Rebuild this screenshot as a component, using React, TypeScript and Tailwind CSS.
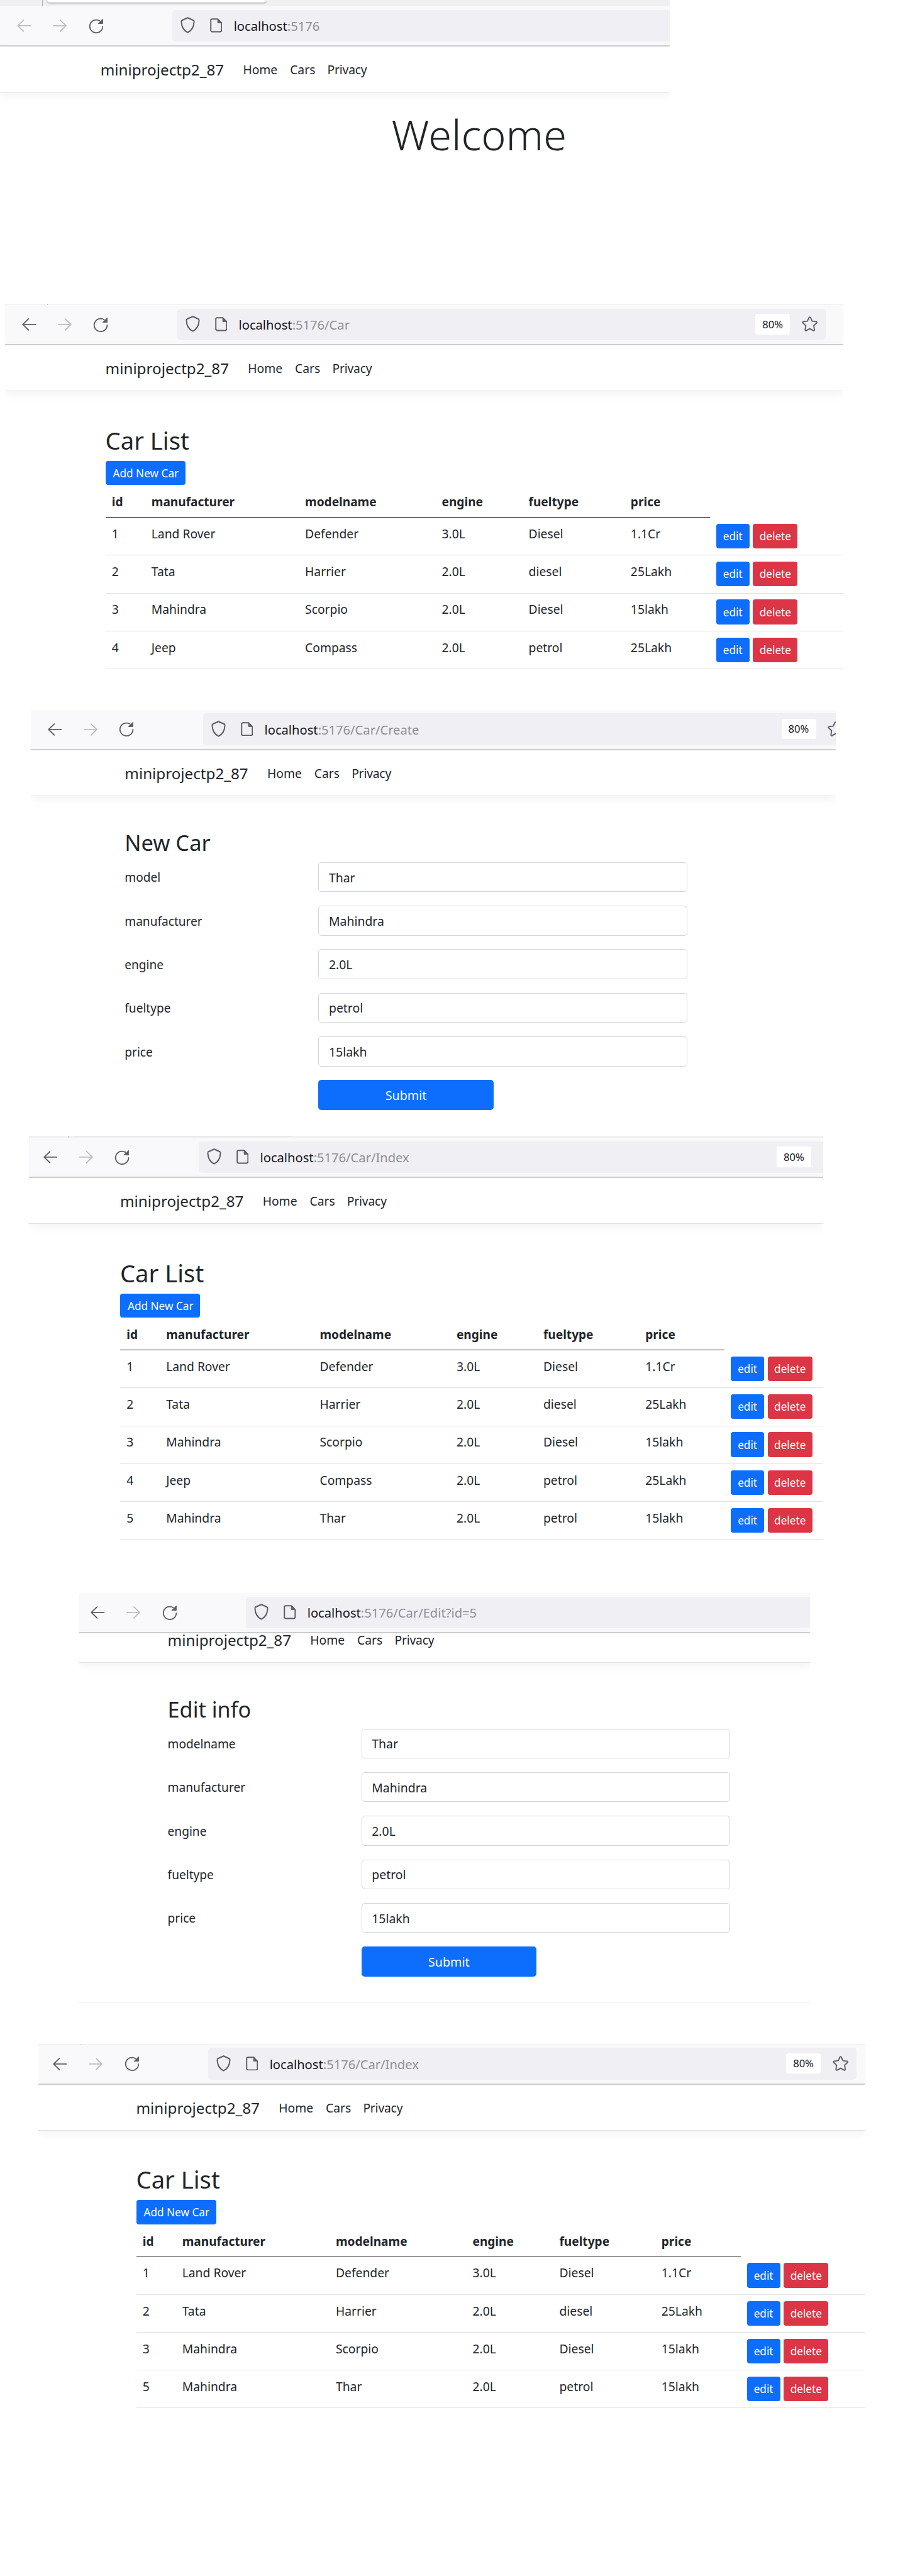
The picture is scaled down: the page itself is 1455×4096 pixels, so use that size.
import type { ReactNode } from "react";

type Car = [string, string, string, string, string, string];

const LAND_ROVER: Car = ["1", "Land Rover", "Defender", "3.0L", "Diesel", "1.1Cr"];
const TATA: Car = ["2", "Tata", "Harrier", "2.0L", "diesel", "25Lakh"];
const MAHINDRA: Car = ["3", "Mahindra", "Scorpio", "2.0L", "Diesel", "15lakh"];
const JEEP: Car = ["4", "Jeep", "Compass", "2.0L", "petrol", "25Lakh"];
const THAR: Car = ["5", "Mahindra", "Thar", "2.0L", "petrol", "15lakh"];

/* ---------- toolbar icons ---------- */

function ArrowLeft({ disabled }: { disabled: boolean }) {
  return (
    <svg viewBox="0 0 28 25" className="h-[19.8px] w-[22.2px] shrink-0" fill="none" stroke={disabled ? "#bdbdc2" : "#5b5b66"} strokeWidth="2.3" strokeLinecap="round" strokeLinejoin="round">
      <path d="M26.8 12.5H1.6M13 1.3 1.6 12.5 13 23.7" />
    </svg>
  );
}

function ArrowRight() {
  return (
    <svg viewBox="0 0 28 25" className="h-[19.8px] w-[22.2px] shrink-0" fill="none" stroke="#bdbdc2" strokeWidth="2.3" strokeLinecap="round" strokeLinejoin="round">
      <path d="M1.2 12.5h25.2M15 1.3l11.4 11.2L15 23.7" />
    </svg>
  );
}

function Reload() {
  return (
    <svg viewBox="0 0 30 31" className="h-[24.5px] w-[23.8px] shrink-0" fill="none">
      <path d="M22 5.2A13 13 0 1 0 28.2 16.3" stroke="#5b5b66" strokeWidth="2.3" strokeLinecap="round" />
      <path d="M28.3 1.6v9.2h-9.2z" fill="#5b5b66" stroke="#5b5b66" strokeWidth="1.2" strokeLinejoin="round" />
    </svg>
  );
}

function Shield() {
  return (
    <svg viewBox="0 0 29 33" className="mb-[2px] h-[25.8px] w-[23px] shrink-0" fill="none" stroke="#5b5b66" strokeWidth="2.5" strokeLinejoin="round">
      <path d="M14.5 1.6 25.9 6.7q1.6.8 1.5 2.7C27 19.5 22.8 27.4 14.5 31.4 6.2 27.4 2 19.5 1.6 9.4Q1.5 7.5 3.1 6.7Z" />
    </svg>
  );
}

function PageIcon() {
  return (
    <svg viewBox="0 0 25 29" className="mb-px h-[22.6px] w-[19.6px] shrink-0" fill="none" stroke="#5b5b66" strokeWidth="2.5" strokeLinejoin="round">
      <path d="M15.5 1.5H4.3A2.8 2.8 0 0 0 1.5 4.3v20.4a2.8 2.8 0 0 0 2.8 2.8h16.4a2.8 2.8 0 0 0 2.8-2.8V9.5z" />
      <path d="M15.5 1.8v7.7h7.7z" fill="#5b5b66" strokeWidth="1" />
    </svg>
  );
}

function Star({ className }: { className: string }) {
  return (
    <svg viewBox="0 0 32 31" className={`mb-px h-[24.6px] w-[25.4px] shrink-0 ${className}`} fill="none" stroke="#5b5b66" strokeWidth="2.4" strokeLinejoin="round">
      <path d="M14.5 2.5q1.5-2.2 3 0l3.3 7.1 7.9 1q2.5.6 1 2.6l-5.7 5.5 1.3 8q0 2.6-2.5 1.8L16 24.7l-6.8 3.8q-2.5.8-2.5-1.8l1.3-8-5.7-5.5q-1.5-2 1-2.6l7.9-1z" />
    </svg>
  );
}

/* ---------- shared pieces ---------- */

type WindowProps = {
  /** left offset and width of the window */
  frame: string;
  /** left padding of the browser toolbar */
  toolbar: string;
  /** left padding of the page container */
  container: string;
  path: string;
  strip: ReactNode;
  urlBar?: string;
  zoom?: ReactNode;
  nav?: string;
  children: ReactNode;
};

function BrowserWindow({ frame, toolbar, container, path, strip, urlBar = "rounded-l-[5px]", zoom, nav = "h-[73px]", children }: WindowProps) {
  return (
    <div className={`overflow-hidden ${frame}`}>
      {strip}
      <div className={`flex h-[64.3px] items-center border-b-2 border-[#cfcfd2] bg-[#f9f9fb] ${toolbar}`}>
        <ArrowLeft disabled={path === ""} />
        <div className="w-[34.8px] shrink-0" />
        <ArrowRight />
        <div className="w-[34.4px] shrink-0" />
        <Reload />
        <div className="w-[109.3px] shrink-0" />
        <div className={`flex h-[50.7px] min-w-0 flex-1 items-center bg-[#f0f0f4] pl-[13.5px] ${urlBar}`}>
          <Shield />
          <div className="w-[23.7px] shrink-0" />
          <PageIcon />
          <div className="ml-[18.2px] pt-[0.5px] text-[20.15px] leading-[30px] whitespace-nowrap text-[#8f8f96]">
            <span className="text-[#15141a]">localhost</span>:5176{path}
          </div>
          <div className="flex-1" />
          {zoom}
        </div>
      </div>
      <div className={`flex items-end border-b border-[#dfe1e3] shadow-[0_5px_15px_rgba(0,0,0,0.05)] ${nav} ${container}`}>
        <div className="flex h-[72px] shrink-0 items-center text-[19.3px]">
          <div className="w-[226.7px] pt-[2px] text-[24.2px] leading-[38px]">miniprojectp2_87</div>
          <div className="w-[74.8px] pt-[3px]">Home</div>
          <div className="w-[59.4px] pt-[3px]">Cars</div>
          <div className="pt-[3px] tracking-[-0.2px]">Privacy</div>
        </div>
      </div>
      {children}
    </div>
  );
}

function ZoomBadge() {
  return <div className="mb-px flex h-[32.5px] w-[55px] shrink-0 items-center justify-center rounded-[4px] bg-white pt-px text-[16.6px] text-[#15141a]">80%</div>;
}

function CarList({ container, cars }: { container: string; cars: Car[] }) {
  return (
    <div className={`flex flex-col items-start pt-[53.5px] ${container}`}>
      <h2 className="mb-[9px] text-[38.2px] leading-[48px]">Car List</h2>
      <button className="h-[38.7px] w-[127.5px] rounded-[4px] bg-[#0d6efd] pt-px pl-px text-[17.2px] text-white">Add New Car</button>
      <div className="grid h-[51.7px] w-[961px] grid-cols-[63px_244.3px_217.5px_138px_162.3px_1fr] items-center border-b border-[#212529] pt-[3px] pl-[10.2px] text-[19.1px] font-bold">
        <div>id</div>
        <div>manufacturer</div>
        <div>modelname</div>
        <div>engine</div>
        <div>fueltype</div>
        <div>price</div>
      </div>
      {cars.map((car) => (
        <div key={car[0]} className="flex h-[60.2px] w-full border-b border-[#dee2e6] pt-[9.8px]">
          <div className="grid w-[961px] shrink-0 grid-cols-[63px_244.3px_217.5px_138px_162.3px_1fr] pl-[10.2px] text-[19.3px] leading-[32px]">
            {car.map((value, i) => (
              <div key={i}>{value}</div>
            ))}
          </div>
          <div className="flex h-[39.3px] shrink-0 gap-[5.5px] pl-[10px] text-[17.2px] text-white">
            <button className="w-[53.2px] rounded-[4px] bg-[#0d6efd] pt-px">edit</button>
            <button className="w-[71.2px] rounded-[4px] bg-[#dc3545] pt-px">delete</button>
          </div>
        </div>
      ))}
    </div>
  );
}

function CarForm({ container, title, modelLabel }: { container: string; title: ReactNode; modelLabel: string }) {
  const fields = [
    [modelLabel, "Thar"],
    ["manufacturer", "Mahindra"],
    ["engine", "2.0L"],
    ["fueltype", "petrol"],
    ["price", "15lakh"],
  ];
  return (
    <div className={`pt-[53.5px] text-[19.1px] ${container}`}>
      {title}
      <div className="flex flex-col gap-[21.8px]">
        {fields.map(([label, value]) => (
          <div key={label} className="flex h-[47.5px] items-center">
            <div className="w-[308px] pt-[2px]">{label}</div>
            <div className="flex h-full w-[586.5px] items-center rounded-[5px] border border-[#d3d7db] pt-px pl-[15.7px] text-[19.4px]">{value}</div>
          </div>
        ))}
        <button className="ml-[308px] h-[47.5px] w-[278.5px] rounded-[5px] bg-[#0d6efd] pt-px text-[19.7px] text-white">Submit</button>
      </div>
    </div>
  );
}

/* Bottom sliver of the tab bar, with one divider mark */
function TabSliver() {
  return (
    <div className="h-px bg-[#eeeeee]">
      <div className="ml-[67px] h-full w-px bg-[#b0b0b0]" />
    </div>
  );
}

/* ---------- page ---------- */

export default function App() {
  return (
    <div className="h-[4096px] w-[1455px] overflow-hidden bg-white font-['Noto_Sans','Open_Sans',sans-serif] text-[#212529]">
      <section className="h-[484px]">
        <BrowserWindow
          frame="w-[1064.5px]"
          toolbar="pl-[27px]"
          container="pl-[159.7px]"
          path=""
          strip={
            <div className="flex h-[10px] bg-[#f0f0f0]">
              <div className="ml-[67px] h-full w-px bg-[#b0b0b0]" />
              <div className="ml-[7px] h-[4px] w-[348px] rounded-b-[4px] bg-white shadow-[0_1px_3px_rgba(0,0,0,0.4)]" />
            </div>
          }
        >
          <h1 className="pt-[20px] pb-4 pl-[622.5px] text-[66.7px] leading-[94px] font-light">Welcome</h1>
        </BrowserWindow>
      </section>

      <section className="h-[644.5px]">
        <BrowserWindow
          frame="ml-[7.9px] w-[1333.6px]"
          toolbar="pl-[27px]"
          container="pl-[159.7px]"
          path="/Car"
          strip={<TabSliver />}
          urlBar="mr-[28.5px] rounded-[5px] pr-[12.7px]"
          zoom={
            <>
              <ZoomBadge />
              <Star className="ml-[18.7px]" />
            </>
          }
        >
          <CarList container="pl-[159.7px]" cars={[LAND_ROVER, TATA, MAHINDRA, JEEP]} />
        </BrowserWindow>
      </section>

      <section className="h-[677px]">
        <BrowserWindow
          frame="ml-[48.9px] w-[1280.1px]"
          toolbar="pl-[27px]"
          container="pl-[149.4px]"
          path="/Car/Create"
          strip={null}
          zoom={
            <>
              <ZoomBadge />
              <Star className="-mr-[12.6px] ml-[18.7px]" />
            </>
          }
        >
          <CarForm container="pl-[149.4px]" title={<h3 className="mb-[9.6px] text-[34.5px] leading-[42px]">New Car</h3>} modelLabel="model" />
        </BrowserWindow>
      </section>

      <section className="h-[727.5px]">
        <BrowserWindow
          frame="ml-[45.9px] w-[1263.1px]"
          toolbar="pl-[23px]"
          container="pl-[145.1px]"
          path="/Car/Index"
          strip={
            <div className="flex h-[3.5px] bg-[#f0f0f0]">
              <div className="ml-[63px] h-full w-px bg-[#b0b0b0]" />
              <div className="ml-[7px] h-px w-[348px] bg-[#e2e2e2]" />
            </div>
          }
          urlBar="rounded-l-[5px] pr-[19px]"
          zoom={<ZoomBadge />}
        >
          <CarList container="pl-[145.1px]" cars={[LAND_ROVER, TATA, MAHINDRA, JEEP, THAR]} />
        </BrowserWindow>
      </section>

      <section className="h-[716.5px]">
        <BrowserWindow
          frame="ml-[125.1px] w-[1162.7px]"
          toolbar="pl-[19px]"
          container="pl-[141.5px]"
          path="/Car/Edit?id=5"
          strip={null}
          nav="h-[46.3px] overflow-hidden"
        >
          <CarForm container="pl-[141.5px]" title={<h3 className="mb-[9.6px] text-[34.2px] leading-[42px]">Edit info</h3>} modelLabel="modelname" />
          <div className="mt-[40.5px] h-px bg-[#dee2e6]" />
        </BrowserWindow>
      </section>

      <section className="h-[846.5px]">
        <BrowserWindow
          frame="ml-[60.5px] w-[1315.3px]"
          toolbar="pl-[23.5px]"
          container="pl-[156px]"
          path="/Car/Index"
          strip={<TabSliver />}
          urlBar="mr-[14px] rounded-[5px] pr-[12.7px]"
          zoom={
            <>
              <ZoomBadge />
              <Star className="ml-[18.7px]" />
            </>
          }
        >
          <CarList container="pl-[156px]" cars={[LAND_ROVER, TATA, MAHINDRA, THAR]} />
        </BrowserWindow>
      </section>
    </div>
  );
}
